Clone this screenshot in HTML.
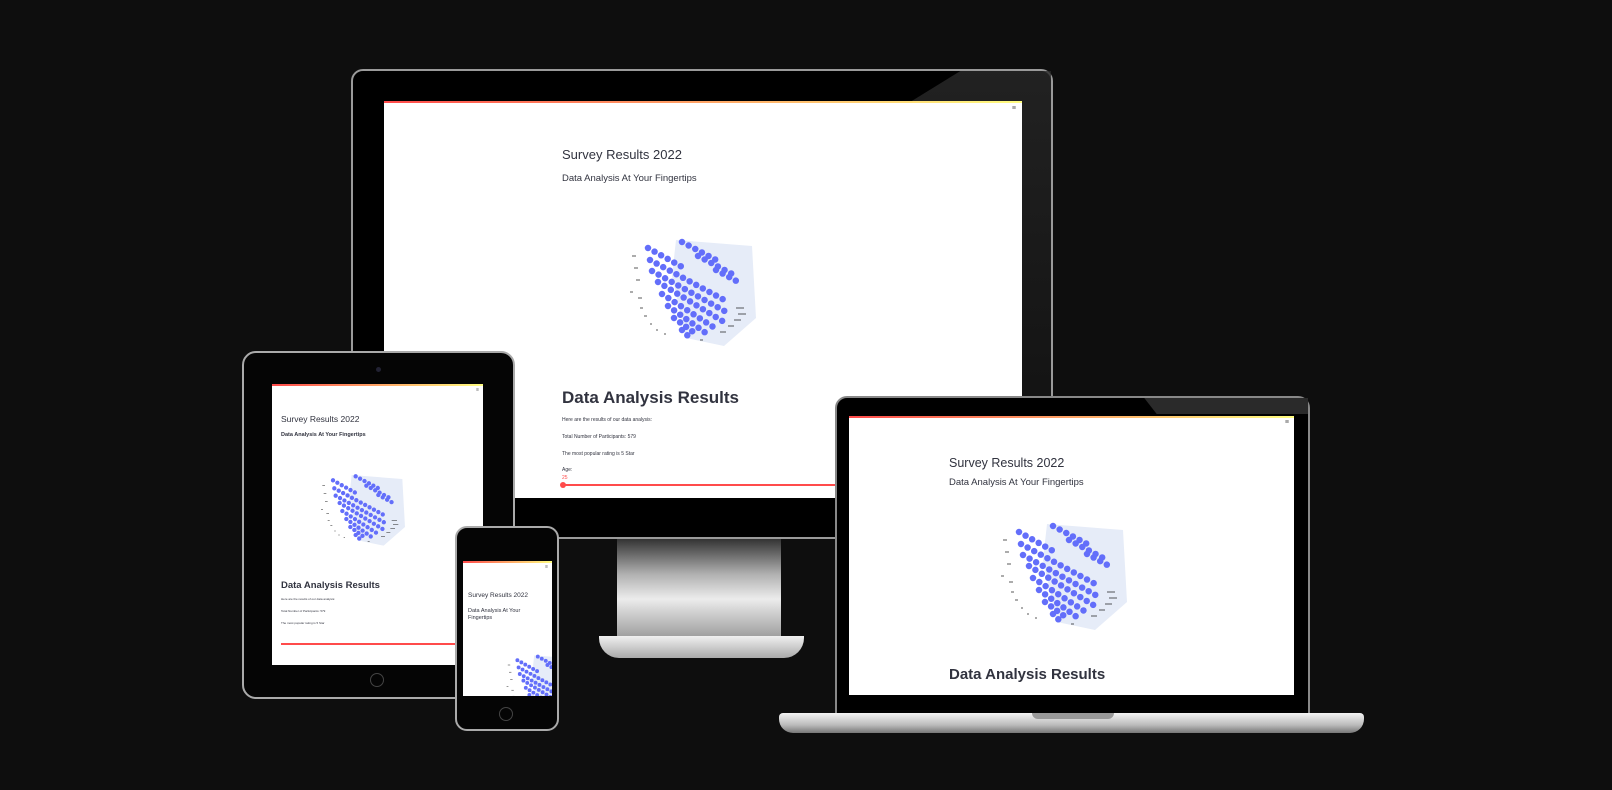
<!DOCTYPE html>
<html><head><meta charset="utf-8"><style>
body{margin:0;width:1612px;height:790px;background:#0e0e0e;position:relative;overflow:hidden;font-family:"Liberation Sans",sans-serif;}
.a{position:absolute;}
.scr{position:absolute;background:#fff;overflow:hidden;}
.scr:before{content:"";position:absolute;left:0;top:0;right:0;height:2px;background:linear-gradient(90deg,#ff4b4b,#fffd80);}
.t{position:absolute;color:#31333f;white-space:nowrap;}
.h{position:absolute;font-size:7px;color:#555;}
</style></head><body>
<svg width="0" height="0" style="position:absolute"><defs>
<g id="ch">
<polygon points="52,4 128,10 132,82 100,110 62,102 48,40" fill="#e6ecf8"/>
<g stroke="#636efa" stroke-width="6.5" stroke-linecap="round" stroke-dasharray="0 7.5" fill="none">
<path d="M24 12L60 32M26 24L104 66M28 35L106 78M34 46L100 86M38 58L94 94M44 70L86 100M50 82L72 98M58 6L96 26M74 20L112 40M92 34L118 48M58 94L68 104"/>
</g>
<g stroke="#222" stroke-width="0.8">
<path d="M8 20h4M10 32h4M12 44h4M6 56h3M14 62h4M16 72h3M20 80h3M26 88h2M32 94h2M40 98h2M112 72h8M114 78h8M110 84h7M104 90h6M96 96h6M76 104h3"/>
</g>
</g></defs></svg>

<!-- Monitor -->
<div class="a" style="left:351px;top:69px;width:702px;height:470px;background:#000;border:2px solid #9a9a9a;border-radius:12px;box-sizing:border-box;"></div>
<div class="a" style="left:900px;top:71px;width:151px;height:466px;background:linear-gradient(180deg,#2a2a2a,#111);clip-path:polygon(40% 0,100% 0,100% 100%,0 100%,0 8%);opacity:.8"></div>
<div class="a" style="left:617px;top:539px;width:164px;height:100px;background:linear-gradient(180deg,#333 0%,#b0b0b0 35%,#ececec 60%,#9a9a9a 100%);"></div>
<div class="a" style="left:599px;top:636px;width:205px;height:22px;background:linear-gradient(180deg,#f0f0f0,#aaa);border-radius:0 0 20px 20px;"></div>
<div class="scr" style="left:384px;top:101px;width:638px;height:397px;">
<div class="h" style="right:6px;top:4px;">≡</div>
<div class="t" style="left:178px;top:46px;font-size:13px;">Survey Results 2022</div>
<div class="t" style="left:178px;top:72px;font-size:9.5px;">Data Analysis At Your Fingertips</div>
<svg class="a" style="left:240px;top:135px" width="150" height="110" viewBox="0 0 150 110"><use href="#ch"/></svg>
<div class="t" style="left:178px;top:287px;font-size:17px;font-weight:bold;">Data Analysis Results</div>
<div class="t" style="left:178px;top:316px;font-size:5px;">Here are the results of our data analysis:</div>
<div class="t" style="left:178px;top:333px;font-size:5px;">Total Number of Participants: 579</div>
<div class="t" style="left:178px;top:350px;font-size:5px;">The most popular rating is 5 Star</div>
<div class="t" style="left:178px;top:366px;font-size:5px;">Age:</div>
<div class="t" style="left:178px;top:374px;font-size:5px;color:#ff4b4b;">25</div>
<div class="a" style="left:178px;top:383px;width:460px;height:2px;background:#ff4b4b;"></div>
<div class="a" style="left:176px;top:381px;width:6px;height:6px;border-radius:50%;background:#ff4b4b;"></div>
</div>

<!-- Tablet -->
<div class="a" style="left:242px;top:351px;width:273px;height:348px;background:#050505;border:2px solid #aaa;border-radius:14px;box-sizing:border-box;"></div>
<div class="a" style="left:376px;top:367px;width:5px;height:5px;border-radius:50%;background:#223;"></div>
<div class="a" style="left:370px;top:673px;width:14px;height:14px;border-radius:50%;border:1.5px solid #444;box-sizing:border-box;"></div>
<div class="scr" style="left:272px;top:384px;width:211px;height:281px;">
<div class="h" style="right:4px;top:3px;font-size:5px;">≡</div>
<div class="t" style="left:9px;top:30px;font-size:8.5px;">Survey Results 2022</div>
<div class="t" style="left:9px;top:48px;font-size:5.5px;font-weight:bold;">Data Analysis At Your Fingertips</div>
<div class="a" style="left:45px;top:88px;"><svg width="100" height="74" viewBox="0 0 150 110"><use href="#ch"/></svg></div>
<div class="t" style="left:9px;top:196px;font-size:9.5px;font-weight:bold;">Data Analysis Results</div>
<div class="t" style="left:9px;top:213px;font-size:3px;">Here are the results of our data analysis:</div>
<div class="t" style="left:9px;top:225px;font-size:3px;">Total Number of Participants: 579</div>
<div class="t" style="left:9px;top:237px;font-size:3px;">The most popular rating is 5 Star</div>
<div class="a" style="left:9px;top:259px;width:210px;height:1.5px;background:#ff4b4b;"></div>
</div>

<!-- Phone -->
<div class="a" style="left:455px;top:526px;width:104px;height:205px;background:#050505;border:2px solid #aaa;border-radius:12px;box-sizing:border-box;"></div>
<div class="a" style="left:499px;top:707px;width:14px;height:14px;border-radius:50%;border:1.5px solid #444;box-sizing:border-box;"></div>
<div class="scr" style="left:463px;top:561px;width:89px;height:135px;">
<div class="h" style="right:4px;top:3px;font-size:5px;">≡</div>
<div class="t" style="left:5px;top:31px;font-size:6.5px;">Survey Results 2022</div>
<div class="t" style="left:5px;top:47px;font-size:5.5px;line-height:7px;">Data Analysis At Your<br>Fingertips</div>
<div class="a" style="left:40px;top:92px;"><svg width="90" height="66" viewBox="0 0 150 110"><use href="#ch"/></svg></div>
</div>

<!-- Laptop -->
<div class="a" style="left:835px;top:396px;width:475px;height:320px;background:#000;border:2px solid #888;border-radius:12px 12px 0 0;box-sizing:border-box;"></div>
<div class="a" style="left:1130px;top:398px;width:178px;height:16px;background:#2a2a2a;clip-path:polygon(8% 0,100% 0,100% 100%,15% 100%);"></div>
<div class="scr" style="left:849px;top:416px;width:445px;height:279px;">
<div class="h" style="right:5px;top:3px;">≡</div>
<div class="t" style="left:100px;top:40px;font-size:12.5px;">Survey Results 2022</div>
<div class="t" style="left:100px;top:61px;font-size:9.5px;">Data Analysis At Your Fingertips</div>
<svg class="a" style="left:146px;top:104px" width="150" height="110" viewBox="0 0 150 110"><use href="#ch"/></svg>
<div class="t" style="left:100px;top:250px;font-size:15px;font-weight:bold;">Data Analysis Results</div>
</div>
<div class="a" style="left:779px;top:713px;width:585px;height:20px;background:linear-gradient(180deg,#f4f4f4,#bbb 60%,#777);border-radius:4px 4px 14px 14px;"></div>
<div class="a" style="left:1032px;top:713px;width:82px;height:6px;background:#999;border-radius:0 0 6px 6px;"></div>
</body></html>
